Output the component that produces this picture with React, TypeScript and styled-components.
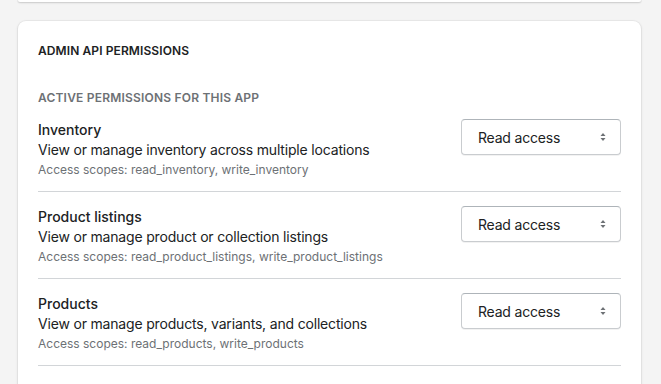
import React from "react"
import styled, { createGlobalStyle } from "styled-components"

const GlobalStyle = createGlobalStyle`
  html, body {
    margin: 0;
    padding: 0;
    background: #f4f4f4;
    font-family: Inter, "Noto Sans", Arial, sans-serif;
    color: #202223;
    -webkit-font-smoothing: antialiased;
  }
`

const Page = styled.div`
  display: flex;
  flex-direction: column;
  gap: 19px;
  padding: 0 20px 0 18px;
  height: 384px;
  overflow: hidden;
`

const PrevCard = styled.div`
  flex-shrink: 0;
  height: 2px;
  background: #fff;
  border-radius: 0 0 8px 8px;
  box-shadow: 0 1px 2px rgba(0, 0, 0, 0.15), 0 0 0 1px rgba(63, 63, 68, 0.05);
`

const Card = styled.section`
  flex-shrink: 0;
  background: #fff;
  border-radius: 8px;
  box-shadow: 0 0 0 1px rgba(63, 63, 68, 0.05), 0 1px 3px rgba(63, 63, 68, 0.15);
  padding: 22px 20px 40px 20px;
`

const Heading = styled.h2`
  margin: 0;
  font-size: 12px;
  line-height: 16px;
  font-weight: 600;
  text-transform: uppercase;
  letter-spacing: 0.1px;
  color: #202223;
`

const Subheading = styled.h3`
  margin: 31px 0 0 0;
  font-size: 12px;
  line-height: 16px;
  font-weight: 600;
  text-transform: uppercase;
  letter-spacing: 0.2px;
  color: #6d7175;
`

const List = styled.div`
  display: flex;
  flex-direction: column;
`

const Row = styled.div<{ $first?: boolean }>`
  display: flex;
  justify-content: space-between;
  align-items: flex-start;
  padding: ${p => (p.$first ? "14px" : "15px")} 0 11px 0;
  border-bottom: 1px solid #d2d5d8;
`

const Info = styled.div`
  display: flex;
  flex-direction: column;
`

const Title = styled.div`
  font-size: 14px;
  line-height: 20px;
  font-weight: 500;
  color: #202223;
`

const Description = styled.div`
  font-size: 14px;
  line-height: 20px;
  letter-spacing: -0.18px;
  color: #202223;
`

const Scopes = styled.div`
  font-size: 12px;
  line-height: 20px;
  color: #6d7175;
`

const SelectBox = styled.div`
  width: 160px;
  height: 36px;
  margin-top: -1px;
  box-sizing: border-box;
  display: flex;
  align-items: center;
  justify-content: space-between;
  padding: 0 12px 0 16px;
  border: 1px solid #c9cccf;
  border-top-color: #aeb4b9;
  border-radius: 4px;
  background: #fff;
  font-size: 14px;
  letter-spacing: -0.2px;
  color: #202223;
  box-shadow: 0 1px 0 rgba(0, 0, 0, 0.05);
`

const Arrows = () => (
  <svg width="10" height="12" viewBox="0 0 10 12">
    <path d="M2.5 5 L5 2 L7.5 5 Z" fill="#6d7175" />
    <path d="M2.5 7 L5 10 L7.5 7 Z" fill="#6d7175" />
  </svg>
)

const permissions = [
  {
    title: "Inventory",
    description: "View or manage inventory across multiple locations",
    scopes: "read_inventory, write_inventory",
  },
  {
    title: "Product listings",
    description: "View or manage product or collection listings",
    scopes: "read_product_listings, write_product_listings",
  },
  {
    title: "Products",
    description: "View or manage products, variants, and collections",
    scopes: "read_products, write_products",
  },
]

export default function App() {
  return (
    <>
      <GlobalStyle />
      <Page>
        <PrevCard />
        <Card>
          <Heading>Admin API permissions</Heading>
          <Subheading>Active permissions for this app</Subheading>
          <List>
            {permissions.map((p, i) => (
              <Row key={p.title} $first={i === 0}>
                <Info>
                  <Title>{p.title}</Title>
                  <Description>{p.description}</Description>
                  <Scopes>Access scopes: {p.scopes}</Scopes>
                </Info>
                <SelectBox>
                  <span>Read access</span>
                  <Arrows />
                </SelectBox>
              </Row>
            ))}
          </List>
        </Card>
      </Page>
    </>
  )
}
